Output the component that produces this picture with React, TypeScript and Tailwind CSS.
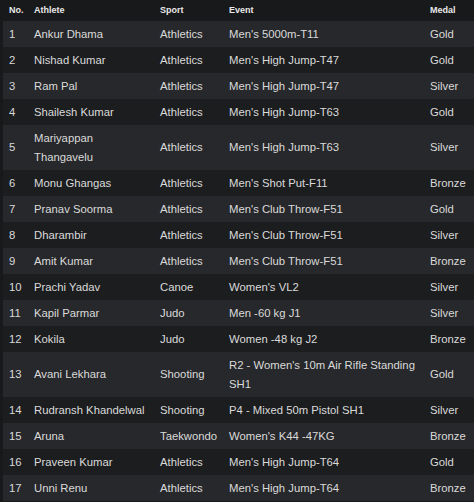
const medalists = [
  { no: 1, athlete: 'Ankur Dhama', sport: 'Athletics', event: "Men's 5000m-T11", medal: 'Gold' },
  { no: 2, athlete: 'Nishad Kumar', sport: 'Athletics', event: "Men's High Jump-T47", medal: 'Gold' },
  { no: 3, athlete: 'Ram Pal', sport: 'Athletics', event: "Men's High Jump-T47", medal: 'Silver' },
  { no: 4, athlete: 'Shailesh Kumar', sport: 'Athletics', event: "Men's High Jump-T63", medal: 'Gold' },
  { no: 5, athlete: 'Mariyappan Thangavelu', sport: 'Athletics', event: "Men's High Jump-T63", medal: 'Silver' },
  { no: 6, athlete: 'Monu Ghangas', sport: 'Athletics', event: "Men's Shot Put-F11", medal: 'Bronze' },
  { no: 7, athlete: 'Pranav Soorma', sport: 'Athletics', event: "Men's Club Throw-F51", medal: 'Gold' },
  { no: 8, athlete: 'Dharambir', sport: 'Athletics', event: "Men's Club Throw-F51", medal: 'Silver' },
  { no: 9, athlete: 'Amit Kumar', sport: 'Athletics', event: "Men's Club Throw-F51", medal: 'Bronze' },
  { no: 10, athlete: 'Prachi Yadav', sport: 'Canoe', event: "Women's VL2", medal: 'Silver' },
  { no: 11, athlete: 'Kapil Parmar', sport: 'Judo', event: 'Men -60 kg J1', medal: 'Silver' },
  { no: 12, athlete: 'Kokila', sport: 'Judo', event: 'Women -48 kg J2', medal: 'Bronze' },
  { no: 13, athlete: 'Avani Lekhara', sport: 'Shooting', event: "R2 - Women's 10m Air Rifle Standing SH1", medal: 'Gold' },
  { no: 14, athlete: 'Rudransh Khandelwal', sport: 'Shooting', event: 'P4 - Mixed 50m Pistol SH1', medal: 'Silver' },
  { no: 15, athlete: 'Aruna', sport: 'Taekwondo', event: "Women's K44 -47KG", medal: 'Bronze' },
  { no: 16, athlete: 'Praveen Kumar', sport: 'Athletics', event: "Men's High Jump-T64", medal: 'Gold' },
  { no: 17, athlete: 'Unni Renu', sport: 'Athletics', event: "Men's High Jump-T64", medal: 'Bronze' },
]

const App = () => {
  return (
    <div className="min-h-screen w-[474px] bg-[#18191b] pl-[3px] font-['Liberation_Sans',Arial,sans-serif]">
      <table className="w-[471px] table-fixed border-collapse text-left">
        <colgroup>
          <col className="w-[25px]" />
          <col className="w-[126px]" />
          <col className="w-[69px]" />
          <col className="w-[201px]" />
          <col className="w-[50px]" />
        </colgroup>
        <thead>
          <tr className="h-[21px] text-[9px] font-bold text-[#e8e8e8]">
            <th className="px-[6px] pt-[1px] font-bold">No.</th>
            <th className="px-[6px] pt-[1px] font-bold">Athlete</th>
            <th className="px-[6px] pt-[1px] font-bold">Sport</th>
            <th className="px-[6px] pt-[1px] font-bold">Event</th>
            <th className="px-[6px] pt-[1px] font-bold">Medal</th>
          </tr>
        </thead>
        <tbody>
          {medalists.map((m, i) => (
            <tr
              key={m.no}
              className={`h-[26px] text-[11.3px] leading-[19px] text-[#dadada] ${
                i % 2 === 0 ? 'bg-[#27282b]' : 'bg-[#1c1d1f]'
              }`}
            >
              <td className="px-[6px] py-[3.5px] align-middle">{m.no}</td>
              <td className="px-[6px] py-[3.5px] align-middle">{m.athlete}</td>
              <td className="px-[6px] py-[3.5px] align-middle">{m.sport}</td>
              <td className="px-[6px] py-[3.5px] align-middle">{m.event}</td>
              <td className="px-[6px] py-[3.5px] align-middle">{m.medal}</td>
            </tr>
          ))}
        </tbody>
      </table>
    </div>
  )
}

export default App
